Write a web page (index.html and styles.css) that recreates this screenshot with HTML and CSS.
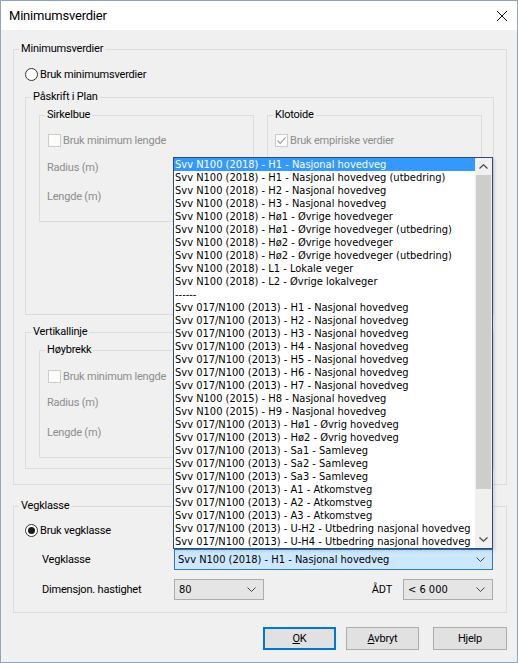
FILE: index.html
```html
<!DOCTYPE html>
<html lang="no">
<head>
<meta charset="utf-8">
<title>Minimumsverdier</title>
<link rel="stylesheet" href="styles.css">
</head>
<body>
<div class="window">
  <div class="titlebar">
    <span class="title">Minimumsverdier</span>
    <svg class="close" width="12" height="12" viewBox="0 0 12 12"><path d="M1 1 L11 11 M11 1 L1 11" stroke="#111" stroke-width="1" fill="none"/></svg>
  </div>
  <div class="client">
    <fieldset class="group g-outer">
      <legend>Minimumsverdier</legend>
      <div class="gb gb-outer">
        <div class="radio-row"><span class="radio"></span><span>Bruk minimumsverdier</span></div>
        <fieldset class="group g-plan">
          <legend>Påskrift i Plan</legend>
          <div class="gb gb-mid gb-plan">
            <div class="pair">
              <fieldset class="group g-sub">
                <legend>Sirkelbue</legend>
                <div class="gb gb-sub">
                  <div class="check-row disabled"><span class="check"></span><span>Bruk minimum lengde</span></div>
                  <div class="text-row r1 disabled">Radius (m)</div>
                  <div class="text-row r2 disabled">Lengde (m)</div>
                </div>
              </fieldset>
              <fieldset class="group g-sub">
                <legend>Klotoide</legend>
                <div class="gb gb-sub gb-right">
                  <div class="check-row disabled"><span class="check"><svg width="11" height="11" viewBox="0 0 11 11"><path d="M1.5 5.5 L4.2 8.3 L9.6 2.4" stroke="#a2a2a2" stroke-width="1.2" fill="none"/></svg></span><span>Bruk empiriske verdier</span></div>
                </div>
              </fieldset>
            </div>
          </div>
        </fieldset>
        <fieldset class="group g-vert">
          <legend>Vertikallinje</legend>
          <div class="gb gb-mid gb-vert">
            <fieldset class="group g-sub">
              <legend>Høybrekk</legend>
              <div class="gb gb-sub gb-sub2">
                <div class="check-row disabled"><span class="check"></span><span>Bruk minimum lengde</span></div>
                <div class="text-row v1 disabled">Radius (m)</div>
                <div class="text-row v2 disabled">Lengde (m)</div>
              </div>
            </fieldset>
          </div>
        </fieldset>
      </div>
    </fieldset>

    <fieldset class="group g-veg">
      <legend>Vegklasse</legend>
      <div class="gb gb-veg">
        <div class="radio-row"><span class="radio on"></span><span>Bruk vegklasse</span></div>
        <div class="form-row row-veg">
          <span class="lbl">Vegklasse</span>
          <div class="combo combo-focus combo-wide"><span class="ctext">Svv N100 (2018) - H1 - Nasjonal hovedveg</span><svg class="chev" width="9" height="5" viewBox="0 0 9 5"><path d="M0.5 0.5 L4.5 4.5 L8.5 0.5" stroke="#444" fill="none"/></svg></div>
        </div>
        <div class="form-row row-dim">
          <span class="lbl">Dimensjon. hastighet</span>
          <div class="combo combo-speed"><span class="ctext">80</span><svg class="chev" width="9" height="5" viewBox="0 0 9 5"><path d="M0.5 0.5 L4.5 4.5 L8.5 0.5" stroke="#444" fill="none"/></svg></div>
          <span class="lbl-adt">ÅDT</span>
          <div class="combo combo-adt"><span class="ctext">&lt; 6 000</span><svg class="chev" width="9" height="5" viewBox="0 0 9 5"><path d="M0.5 0.5 L4.5 4.5 L8.5 0.5" stroke="#444" fill="none"/></svg></div>
        </div>
      </div>
    </fieldset>

    <div class="buttons">
      <button class="btn btn-default"><u>O</u>K</button>
      <button class="btn btn-avbryt"><u>A</u>vbryt</button>
      <button class="btn btn-help">Hjelp</button>
    </div>
  </div>

  <div class="dropdown">
    <ul class="items">
      <li class="sel">Svv N100 (2018) - H1 - Nasjonal hovedveg</li>
      <li>Svv N100 (2018) - H1 - Nasjonal hovedveg (utbedring)</li>
      <li>Svv N100 (2018) - H2 - Nasjonal hovedveg</li>
      <li>Svv N100 (2018) - H3 - Nasjonal hovedveg</li>
      <li>Svv N100 (2018) - Hø1 - Øvrige hovedveger</li>
      <li>Svv N100 (2018) - Hø1 - Øvrige hovedveger (utbedring)</li>
      <li>Svv N100 (2018) - Hø2 - Øvrige hovedveger</li>
      <li>Svv N100 (2018) - Hø2 - Øvrige hovedveger (utbedring)</li>
      <li>Svv N100 (2018) - L1 - Lokale veger</li>
      <li>Svv N100 (2018) - L2 - Øvrige lokalveger</li>
      <li>------</li>
      <li>Svv 017/N100 (2013) - H1 - Nasjonal hovedveg</li>
      <li>Svv 017/N100 (2013) - H2 - Nasjonal hovedveg</li>
      <li>Svv 017/N100 (2013) - H3 - Nasjonal hovedveg</li>
      <li>Svv 017/N100 (2013) - H4 - Nasjonal hovedveg</li>
      <li>Svv 017/N100 (2013) - H5 - Nasjonal hovedveg</li>
      <li>Svv 017/N100 (2013) - H6 - Nasjonal hovedveg</li>
      <li>Svv 017/N100 (2013) - H7 - Nasjonal hovedveg</li>
      <li>Svv N100 (2015) - H8 - Nasjonal hovedveg</li>
      <li>Svv N100 (2015) - H9 - Nasjonal hovedveg</li>
      <li>Svv 017/N100 (2013) - Hø1 - Øvrig hovedveg</li>
      <li>Svv 017/N100 (2013) - Hø2 - Øvrig hovedveg</li>
      <li>Svv 017/N100 (2013) - Sa1 - Samleveg</li>
      <li>Svv 017/N100 (2013) - Sa2 - Samleveg</li>
      <li>Svv 017/N100 (2013) - Sa3 - Samleveg</li>
      <li>Svv 017/N100 (2013) - A1 - Atkomstveg</li>
      <li>Svv 017/N100 (2013) - A2 - Atkomstveg</li>
      <li>Svv 017/N100 (2013) - A3 - Atkomstveg</li>
      <li>Svv 017/N100 (2013) - U-H2 - Utbedring nasjonal hovedveg</li>
      <li>Svv 017/N100 (2013) - U-H4 - Utbedring nasjonal hovedveg</li>
    </ul>
    <div class="scrollbar">
      <div class="sb-btn"><svg width="9" height="5" viewBox="0 0 9 5"><path d="M0.5 4.5 L4.5 0.8 L8.5 4.5" stroke="#505050" stroke-width="1.3" fill="none"/></svg></div>
      <div class="sb-track"><div class="sb-thumb"></div></div>
      <div class="sb-btn"><svg width="9" height="5" viewBox="0 0 9 5"><path d="M0.5 0.5 L4.5 4.2 L8.5 0.5" stroke="#505050" stroke-width="1.3" fill="none"/></svg></div>
    </div>
  </div>
</div>
</body>
</html>
```

FILE: styles.css
```css
* { box-sizing: border-box; }
html, body { margin: 0; padding: 0; }
body {
  width: 518px;
  height: 663px;
  background: #f0f0f0;
  font-family: Roboto, "Liberation Sans", sans-serif;
  font-size: 11px;
  letter-spacing: -0.2px;
  color: #000;
}
.window {
  position: relative;
  width: 518px;
  height: 663px;
  border: 1px solid #8ea3bd;
  background: #f0f0f0;
}
.titlebar {
  height: 29px;
  background: #fff;
  display: flex;
  align-items: center;
  justify-content: space-between;
  padding: 0 9px 0 8px;
}
.title { font-size: 13px; line-height: 16px; }
.close { display: block; }

.client {
  padding: 0 10px 0 12px;
}
.group {
  margin: 0;
  padding: 0;
  border: 1px solid #dcdcdc;
  min-width: 0;
}
.group > legend {
  margin-left: 5px;
  padding: 0 2px;
  line-height: 16px;
  font-size: 11px;
}
.g-outer { margin-top: 11px; }
.gb-outer { padding: 9px 12px 15px 11px; }
.radio-row {
  display: flex;
  align-items: center;
  height: 16px;
  gap: 2px;
}
.radio {
  width: 13px;
  height: 13px;
  border: 1px solid #333;
  border-radius: 50%;
  background: #fff;
  display: flex;
  align-items: center;
  justify-content: center;
}
.radio.on::after {
  content: "";
  width: 7px;
  height: 7px;
  border-radius: 50%;
  background: #1a1a1a;
}
.gb-mid { padding: 2px 11px 0 13px; }
.g-plan { margin-top: 7px; }
.gb-plan { padding-bottom: 92px; }
.g-vert { margin-top: 9px; }
.gb-vert { padding-bottom: 10px; }
.pair {
  display: flex;
  gap: 13px;
}
.g-sub { width: 215px; }
.gb-sub { padding: 9px 8px 16px 8px; }
.gb-sub2 { padding-top: 10px; }
.gb-right { padding-left: 7px; }
.check-row {
  display: flex;
  align-items: center;
  height: 16px;
  gap: 2px;
}
.check {
  width: 13px;
  height: 13px;
  border: 1px solid #cccccc;
  background: #fcfcfc;
  display: flex;
  align-items: center;
  justify-content: center;
}
.disabled { color: #8d8d8d; }
.text-row { height: 16px; line-height: 16px; margin-left: -1px; }
.r1 { margin-top: 12px; }
.r2 { margin-top: 13px; }
.v1 { margin-top: 11px; }
.v2 { margin-top: 14px; }

.g-veg { margin-top: 13px; }
.gb-veg { padding: 8px 12px 12px 11px; }
.form-row {
  display: flex;
  align-items: center;
  height: 21px;
}
.row-veg { margin-top: 11px; }
.row-dim { margin-top: 9px; }
.lbl { width: 149px; padding-left: 17px; }
.lbl-adt { margin-left: auto; margin-right: 11px; }
.combo {
  height: 21px;
  border: 1px solid #acacac;
  background: #e5e5e5;
  display: flex;
  align-items: center;
  justify-content: space-between;
  padding: 0 7px 0 4px;
  font-family: "DejaVu Sans Condensed", "DejaVu Sans", sans-serif;
  font-size: 11px;
  letter-spacing: 0;
}
.combo-wide { width: 319px; }
.combo-speed { width: 90px; }
.combo-adt { width: 90px; margin-right: 1px; }
.combo-focus {
  background: #cce8ff;
  border-color: #2f79c2;
  padding-left: 3px;
}
.chev { display: block; }

.buttons {
  display: flex;
  justify-content: flex-end;
  margin-top: 14px;
}
.btn {
  height: 23px;
  width: 73px;
  border: 1px solid #adadad;
  background: #e1e1e1;
  font-family: Roboto, "Liberation Sans", sans-serif;
  font-size: 11px;
  letter-spacing: -0.2px;
  color: #000;
  padding: 0;
}
.btn-default { border: 2px solid #0078d7; }
.btn-avbryt { margin-left: 10px; }
.btn-help { margin-left: 14px; width: 74px; }

.dropdown {
  position: absolute;
  left: 172px;
  top: 156px;
  width: 320px;
  height: 392px;
  border: 1px solid #2b4e6e;
  background: #fff;
  display: flex;
  box-shadow: 2px 2px 3px rgba(0,0,0,0.12);
}
.items {
  list-style: none;
  margin: 0;
  padding: 0;
  flex: 1;
  font-family: "DejaVu Sans Condensed", "DejaVu Sans", sans-serif;
  font-size: 11px;
  letter-spacing: 0;
}
.items li {
  height: 13px;
  line-height: 13px;
  padding-left: 1px;
  white-space: nowrap;
  overflow: hidden;
}
.items li.sel { background: #3399ff; color: #fff; }
.scrollbar {
  width: 17px;
  display: flex;
  flex-direction: column;
  background: #f0f0f0;
}
.sb-btn {
  height: 17px;
  display: flex;
  align-items: center;
  justify-content: center;
}
.sb-track { flex: 1; padding: 0 1px; }
.sb-thumb { height: 314px; background: #cdcdcd; }
```
